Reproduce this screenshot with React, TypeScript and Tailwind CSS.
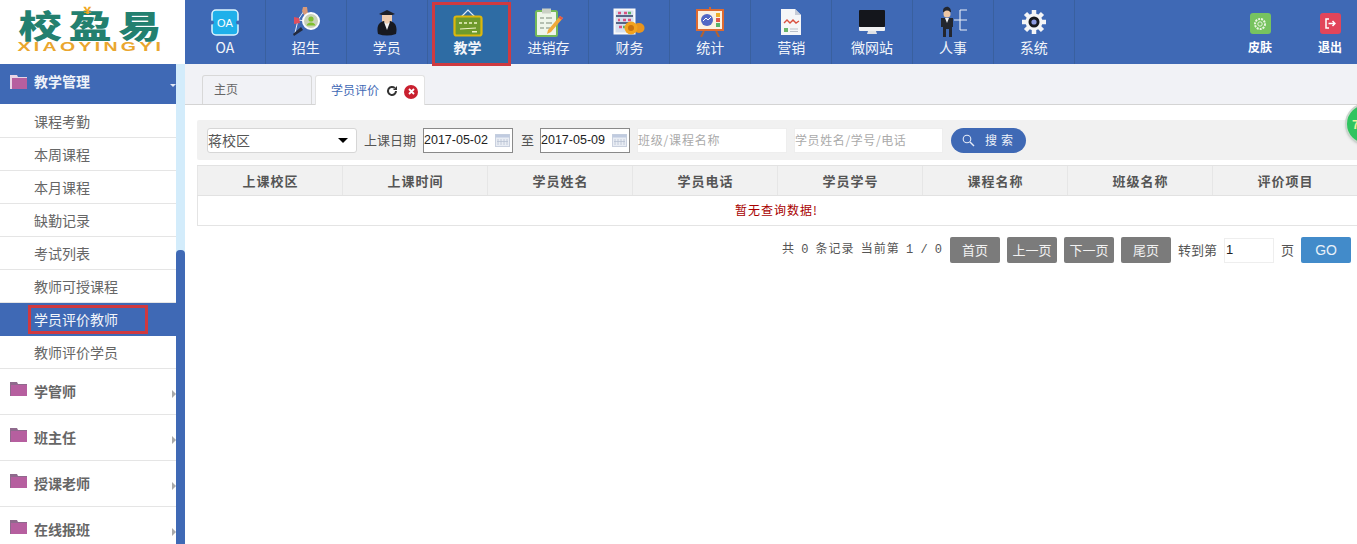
const sans = "font-['Noto_Sans_CJK_SC','Liberation_Sans',sans-serif]";

function OaIcon() {
  return (
    <svg width="28" height="27" viewBox="0 0 28 27">
      <rect x="1" y="1" width="26" height="25" rx="4" fill="#1fb0ea" stroke="#dff6ff" strokeWidth="1.500" />
      <circle cx="1" cy="13.500" r="2" fill="#3f69b5" />
      <circle cx="27" cy="13.500" r="2" fill="#3f69b5" />
      <text x="14" y="17.500" fontSize="11" fill="#fff" textAnchor="middle" fontFamily="Liberation Sans">OA</text>
    </svg>
  );
}

function RecruitIcon() {
  return (
    <svg width="30" height="30" viewBox="0 0 30 30">
      <path d="M13 4L7 13l-3 13M7 13l8 1" fill="none" stroke="#e6edf7" strokeWidth="1" />
      <path d="M12 0h4l1 7-4 1-2-4z" fill="#d99a78" />
      <path d="M3 10l5 1 1 5-6 1z" fill="#df4f5d" />
      <path d="M2 27l8-7 2 3-9 6z" fill="#232a3e" />
      <circle cx="20" cy="14" r="8" fill="#c9d2b8" stroke="#fbfcfe" strokeWidth="2" />
      <circle cx="20" cy="12" r="2.600" fill="#7fc02f" />
      <path d="M15.500 18.500c1-4 8-4 9 0z" fill="#7fc02f" />
    </svg>
  );
}

function StudentIcon() {
  return (
    <svg width="22" height="27" viewBox="0 0 22 27">
      <path d="M3 5l8-4 8 4-8 3z" fill="#1f222a" />
      <path d="M6 6h10v5c0 4-2.500 6-5 6s-5-2-5-6z" fill="#efcdb0" />
      <path d="M2 25c-2-9 2-12 6-13l3 7 3-7c4 1 8 4 6 13q-9 3-18 0z" fill="#171920" />
      <path d="M8 13l3 8 3-8-3 2z" fill="#f2f2f2" />
    </svg>
  );
}

function TeachIcon() {
  return (
    <svg width="30" height="29" viewBox="0 0 30 29">
      <path d="M8 9l7-7 7 7" fill="none" stroke="#e6eef6" strokeWidth="1.200" />
      <rect x="1.500" y="8.500" width="27" height="19" rx="2" fill="#6f9a2c" stroke="#dcb70d" strokeWidth="2.200" />
      <path d="M6 15h3M11 15h3M16 15h3M21 15h3" stroke="#f1f5c8" strokeWidth="1.500" />
      <path d="M7 21l16-1" stroke="#eef3c4" strokeWidth="1.200" />
      <rect x="19" y="23" width="5" height="1.500" fill="#eef3c4" />
    </svg>
  );
}

function StockIcon() {
  return (
    <svg width="30" height="30" viewBox="0 0 30 30">
      <rect x="2" y="4" width="21" height="25" rx="1.500" fill="#eef5ea" stroke="#74b95a" strokeWidth="2" />
      <rect x="8" y="1.500" width="9" height="5" fill="#cbd1c6" />
      <path d="M6 11h4M12 11h6M6 16h4M12 16h6M6 21h4M12 21h4" stroke="#7a8a78" strokeWidth="1.200" />
      <path d="M29 11L17 25l-4 2 1-4L26 9z" fill="#f2a93a" />
      <path d="M29 11l-3-2-1.500 1.800 3 2.200z" fill="#e2574c" />
    </svg>
  );
}

function FinanceIcon() {
  return (
    <svg width="32" height="28" viewBox="0 0 32 28">
      <rect x="1.500" y="1.500" width="20" height="24" fill="#d6e0ef" stroke="#fafafa" strokeWidth="2" />
      <path d="M3 8h17M3 15h17" stroke="#2c3e66" strokeWidth="1.500" />
      <path d="M5 5h3M11 5h3M5 12h2M10 12h3M15 12h3M6 19h3" stroke="#d9527f" strokeWidth="2.400" />
      <path d="M15 5h3M10 19h2" stroke="#58b368" strokeWidth="2.400" />
      <ellipse cx="26" cy="20" rx="5.500" ry="5" fill="#e8951e" />
      <circle cx="18" cy="20" r="6.500" fill="#f2a31f" />
      <circle cx="18" cy="20" r="3" fill="#c9720f" />
    </svg>
  );
}

function StatsIcon() {
  return (
    <svg width="30" height="30" viewBox="0 0 30 30">
      <path d="M15 0v3" stroke="#d9662f" strokeWidth="2" />
      <path d="M9 24L6 30M21 24l3 6" stroke="#b4622f" strokeWidth="2" />
      <rect x="2" y="3" width="26" height="20" fill="#fbf1e2" stroke="#dd6a32" strokeWidth="2" />
      <circle cx="12" cy="13" r="6" fill="#5268c4" />
      <path d="M8 14l3-3 2 2 3-3" fill="none" stroke="#fff" strokeWidth="1" />
      <rect x="21" y="6" width="4" height="4" fill="#ecaf2b" />
      <rect x="21" y="11" width="4" height="4" fill="#e0574a" />
      <rect x="21" y="16" width="4" height="4" fill="#56b36a" />
    </svg>
  );
}

function MarketIcon() {
  return (
    <svg width="22" height="28" viewBox="0 0 22 28">
      <path d="M1 1h14l6 6v20H1z" fill="#f5f6f8" />
      <path d="M15 1l6 6h-6z" fill="#c6ccd8" />
      <path d="M4 15l3-3 3 3 3-3 3 3 3-2" fill="none" stroke="#d9503f" strokeWidth="1.400" />
      <rect x="4" y="20" width="4" height="4" fill="#69b56a" />
      <path d="M10 21h8M10 23.500h8" stroke="#b9bfc9" strokeWidth="1" />
    </svg>
  );
}

function WebIcon() {
  return (
    <svg width="28" height="26" viewBox="0 0 28 26">
      <rect x="1" y="1" width="26" height="17" rx="1" fill="#14161c" />
      <path d="M1 18h26v3a1 1 0 01-1 1H2a1 1 0 01-1-1z" fill="#f0f1f3" />
      <path d="M10 22h8l1 3H9z" fill="#dfe1e5" />
    </svg>
  );
}

function HrIcon() {
  return (
    <svg width="30" height="32" viewBox="0 0 30 32">
      <path d="M6 2c4-3 7 0 7 4H5c0-2 0-3 1-4z" fill="#23262e" />
      <circle cx="9" cy="8" r="3.500" fill="#eec7a4" />
      <path d="M3 12h12v9h-1v10h-3v-8H8v8H5V21H3z" fill="#23262e" />
      <path d="M7 12h4l-2 5z" fill="#f2f2f2" />
      <path d="M16 14h6M22 4v20M22 4h7M22 14h7M22 24h7" fill="none" stroke="#e9eef7" strokeWidth="1.100" />
    </svg>
  );
}

function SystemIcon() {
  return (
    <svg width="26" height="26" viewBox="0 0 26 26">
      <circle cx="13" cy="13" r="8.500" fill="#f4f5f7" />
      <path d="M13 1v24M1 13h24M4.500 4.500l17 17M21.500 4.500l-17 17" stroke="#f4f5f7" strokeWidth="4.500" />
      <circle cx="13" cy="13" r="5.500" fill="#17191f" />
      <circle cx="13" cy="13" r="2.600" fill="#8d9be0" />
    </svg>
  );
}

const navItems = [
  { label: "OA", icon: <OaIcon /> },
  { label: "招生", icon: <RecruitIcon /> },
  { label: "学员", icon: <StudentIcon /> },
  { label: "教学", icon: <TeachIcon />, active: true },
  { label: "进销存", icon: <StockIcon /> },
  { label: "财务", icon: <FinanceIcon /> },
  { label: "统计", icon: <StatsIcon /> },
  { label: "营销", icon: <MarketIcon /> },
  { label: "微网站", icon: <WebIcon /> },
  { label: "人事", icon: <HrIcon /> },
  { label: "系统", icon: <SystemIcon /> },
];

function Folder({ open }: { open?: boolean }) {
  return (
    <svg width="17" height="15" viewBox="0 0 17 15" className="shrink-0">
      <path d="M0 1h7l1 2h9v12H0z" fill={open ? "#e9d5e6" : "#8f6a8d"} />
      <rect x={open ? 2 : 1} y="4" width={open ? 15 : 16} height="11" fill="#b65f9f" />
    </svg>
  );
}

function Header() {
  return (
    <div className="flex h-16 bg-[#3f69b5] shrink-0">
      <div className="w-[185px] shrink-0 bg-white flex flex-col items-center pt-[8px] pr-1 overflow-hidden">
        <div className="relative h-[32px] whitespace-nowrap text-[32px] leading-[32px] font-black tracking-[5px] text-[#23806f] pl-[5px] scale-x-[1.35]">
          校盈易
          <span className="absolute left-[53px] -top-[3px] text-[10px] leading-none font-black text-[#f0a71e]">¥</span>
        </div>
        <div className="text-[13px] leading-[13px] font-bold tracking-[2.200px] whitespace-nowrap text-[#eaa62e] font-['Liberation_Sans',sans-serif] scale-x-[1.5]">XIAOYINGYI</div>
      </div>
      {navItems.map((item) => (
        <div
          key={item.label}
          className={"relative w-[80.9px] shrink-0 border-r border-[#39609f] flex flex-col items-center " + (item.active ? "font-bold" : "")}
        >
          {item.active && <span className="absolute left-[4px] -right-[3px] top-[2px] -bottom-[2px] z-10 bg-[#2e6ca4] border-[3px] border-[#cf3a40]" />}
          <div className="relative z-20 h-[42px] flex items-center justify-center pt-[2px]">{item.icon}</div>
          <div className="relative z-20 text-[14px] leading-[16px] text-[#f2f5fa] -mt-[3px]">{item.label}</div>
        </div>
      ))}
      <div className="flex-1" />
      <div className="w-[70px] flex flex-col items-center pt-[13px]">
        <div className="w-[21px] h-[21px] rounded-[3px] bg-[#77c35f] flex items-center justify-center">
          <svg width="14" height="14" viewBox="0 0 14 14">
            <circle cx="7" cy="7" r="5" fill="none" stroke="#e8f5e0" strokeWidth="2" strokeDasharray="2 1" />
            <circle cx="7" cy="7" r="2.200" fill="none" stroke="#e8f5e0" strokeWidth="1" />
          </svg>
        </div>
        <div className="text-[12px] leading-[14px] font-bold text-white mt-[6px]">皮肤</div>
      </div>
      <div className="w-[54px] ml-[8px] flex flex-col items-center pt-[13px]">
        <div className="w-[21px] h-[21px] rounded-[3px] bg-[#e2455a] flex items-center justify-center">
          <svg width="11" height="11" viewBox="0 0 11 11">
            <path d="M4 1H1v9h3" fill="none" stroke="#fff" strokeWidth="1.500" />
            <path d="M3.500 5.500H10M7.500 3l2.500 2.500L7.500 8" fill="none" stroke="#fff" strokeWidth="1.500" />
          </svg>
        </div>
        <div className="text-[12px] leading-[14px] font-bold text-white mt-[6px]">退出</div>
      </div>
    </div>
  );
}

const subItems = ["课程考勤", "本周课程", "本月课程", "缺勤记录", "考试列表", "教师可授课程", "学员评价教师", "教师评价学员"];
const groups = ["学管师", "班主任", "授课老师", "在线报班"];

function Sidebar() {
  return (
    <div className="relative w-[185px] shrink-0 flex overflow-hidden">
      <div className="w-[176px] shrink-0">
        <div className="h-10 bg-[#3f69b5] flex items-center pl-[10px] pb-[6px] relative">
          <Folder open />
          <span className="ml-[7px] text-[14px] font-bold text-[#eef2f9]">教学管理</span>
          <span className="absolute right-0 top-[20px] w-0 h-0 border-x-[3px] border-t-[3px] border-x-transparent border-t-[#dfe7f5]" />
        </div>
        <div className="pt-px">
          {subItems.map((s) => {
            const active = s === "学员评价教师";
            return (
              <div
                key={s}
                className={
                  "relative h-[33px] pl-[34px] flex items-center text-[14px] border-b " +
                  (active ? "bg-[#3f69b5] text-[#f2f5fa] border-[#3f69b5]" : "text-[#666] border-[#e5e5e5]")
                }
              >
                {s}
                {active && <span className="absolute left-[28px] top-[2px] w-[120px] h-[29px] border-[3px] border-[#d0393f]" />}
              </div>
            );
          })}
        </div>
        {groups.map((g) => (
          <div key={g} className="h-[46px] border-b border-[#e5e5e5] flex items-center pl-[10px] relative">
            <span className="-mt-[6px]"><Folder /></span>
            <span className="ml-[7px] text-[14px] font-bold text-[#666]">{g}</span>
            <span className="absolute right-0 top-[21px] w-0 h-0 border-y-[4px] border-l-[4px] border-y-transparent border-l-[#aaa]" />
          </div>
        ))}
      </div>
      <div className="w-[9px] bg-[#d3ecfb] flex flex-col">
        <div className="h-[186px] shrink-0" />
        <div className="flex-1 rounded-t-[4px] bg-[#3f69b5]" />
      </div>
    </div>
  );
}

const cols = ["上课校区", "上课时间", "学员姓名", "学员电话", "学员学号", "课程名称", "班级名称", "评价项目"];

function DateBox({ value }: { value: string }) {
  return (
    <div className="w-[90px] h-[25px] border border-[#8a8a8a] bg-white flex items-center justify-between pr-[2px]">
      <span className="text-[12.500px] text-[#222] font-['Liberation_Sans',sans-serif]">{value}</span>
      <svg width="15" height="13" viewBox="0 0 15 13">
        <rect x="0.500" y="0.500" width="14" height="12" fill="#e9edf4" stroke="#c9d0de" />
        <rect x="0.500" y="0.500" width="14" height="3" fill="#c0cbe0" />
        <path d="M3 5v6M6 5v6M9 5v6M12 5v6M2 7.500h11" stroke="#b8c1d3" strokeWidth="0.800" />
      </svg>
    </div>
  );
}

function PageBtn({ label }: { label: string }) {
  return <div className="w-[50px] h-[26px] rounded-[2px] bg-[#7b7b7b] text-[#f2f2f2] text-[13px] flex items-center justify-center">{label}</div>;
}

function Content() {
  return (
    <div className="relative flex-1 min-w-0">
      <div className="h-[41px] bg-[#f1f2f6] border-b border-[#d4d4d4] flex items-end pl-[17px] gap-[3px]">
        <div className="w-[110px] h-[29px] border border-b-0 border-[#d8d8d8] rounded-t-[3px] bg-[#f1f2f6] pl-[11px] pt-[4px] text-[12px] text-[#666]">主页</div>
        <div className="w-[110px] h-[30px] -mb-px border border-b-0 border-[#e2e2e2] rounded-t-[3px] bg-white flex items-center pl-[15px] pb-[2px] text-[12px] text-[#3f69b5]">
          学员评价
          <svg width="12" height="12" viewBox="0 0 24 24" className="ml-[7px] mt-[3px]">
            <path d="M20 12a8 8 0 11-2.500-5.800" fill="none" stroke="#333" strokeWidth="4" />
            <path d="M22 2v8h-8z" fill="#333" />
          </svg>
          <span className="ml-[6px] mt-[4px] w-[14px] h-[14px] rounded-full bg-[#c9202f] flex items-center justify-center">
            <svg width="7" height="7" viewBox="0 0 7 7"><path d="M1 1l5 5M6 1L1 6" stroke="#fff" strokeWidth="1.800" /></svg>
          </span>
        </div>
      </div>

      <div className="pl-3 pt-[15px]">
        <div className="h-10 bg-[#f1f1f1] flex items-center pl-[10px] text-[13px] text-[#555] rounded-l-[2px]">
          <div className="w-[150px] h-[25px] rounded-[3px] border border-[#d6d6d6] bg-white flex items-center justify-between pr-[8px] text-[14px] text-[#555]">
            蒋校区
            <span className="w-0 h-0 border-x-[5px] border-t-[5px] border-x-transparent border-t-black" />
          </div>
          <span className="ml-[7px] w-[52px] shrink-0">上课日期</span>
          <span className="ml-[7px]"><DateBox value="2017-05-02" /></span>
          <span className="ml-[8px] mr-[6px]">至</span>
          <DateBox value="2017-05-09" />
          <div className="ml-[7px] w-[150px] h-[25px] bg-white border border-[#eee] flex items-center text-[12px] text-[#aaa] tracking-[0.8px]">班级/课程名称</div>
          <div className="ml-[7px] w-[149px] h-[25px] bg-white border border-[#eee] flex items-center text-[12px] text-[#aaa] tracking-[0.6px]">学员姓名/学号/电话</div>
          <div className="ml-[8px] w-[75px] h-[25px] rounded-full bg-[#3f69b5] flex items-center pl-[11px] text-[12px] text-[#eef2f9]">
            <svg width="13" height="13" viewBox="0 0 13 13">
              <circle cx="5" cy="5" r="3.800" fill="none" stroke="#e6ecf7" strokeWidth="1.100" />
              <path d="M8 8l4 4" stroke="#e6ecf7" strokeWidth="1.400" />
            </svg>
            <span className="ml-[10px] tracking-[4px]">搜索</span>
          </div>
        </div>

        <div className="mt-[5px] grid grid-cols-[repeat(8,145px)] h-[31px] bg-[#f1f1f1] border-y border-[#e2e2e2]">
          {cols.map((c) => (
            <div key={c} className="border-l border-r border-[#e6e6e6] -mr-px flex items-center justify-center text-[13px] font-bold tracking-[1px] text-[#555] pl-px">{c}</div>
          ))}
        </div>
        <div className="h-[30px] pb-[2px] border-l border-b border-[#e4e4e4] flex items-center justify-center text-[12px] tracking-[1px] text-[#a80000]">
          <span className="-ml-[2px]">暂无查询数据!</span>
        </div>

        <div className="mt-[11px] flex items-center text-[12px] text-[#555] pl-[585px]">
          <span className="w-[160px] shrink-0 whitespace-pre tracking-[1px] [word-spacing:-2px] font-['Liberation_Mono','Noto_Sans_CJK_SC',monospace]">共 0 条记录 当前第 1 / 0</span>
          <div className="ml-[8px] flex gap-[7px]">
            <PageBtn label="首页" />
            <PageBtn label="上一页" />
            <PageBtn label="下一页" />
            <PageBtn label="尾页" />
          </div>
          <span className="ml-[7px] text-[13px]">转到第</span>
          <div className="ml-[7px] w-[50px] h-[25px] bg-white border border-[#eee] flex items-center pl-px text-[13px] text-[#222] font-['Liberation_Sans',sans-serif]">1</div>
          <span className="ml-[7px] text-[13px]">页</span>
          <div className="ml-[7px] w-[50px] h-[26px] rounded-[2px] bg-[#428bca] text-[#e8f1f9] text-[14px] flex items-center justify-center font-['Liberation_Sans',sans-serif]">GO</div>
        </div>
      </div>

      <div className="absolute left-[1160px] top-[39px] w-[42px] h-[42px] rounded-full bg-[#2fc45f] border-2 border-[#c9d6cc] shadow flex items-center pl-[5px] text-[12px] font-bold text-[#f2f2a0]">
        7
      </div>
    </div>
  );
}

export default function App() {
  return (
    <div className={`h-[544px] w-[1357px] overflow-hidden flex flex-col bg-white ${sans}`}>
      <Header />
      <div className="flex flex-1 min-h-0">
        <Sidebar />
        <Content />
      </div>
    </div>
  );
}
